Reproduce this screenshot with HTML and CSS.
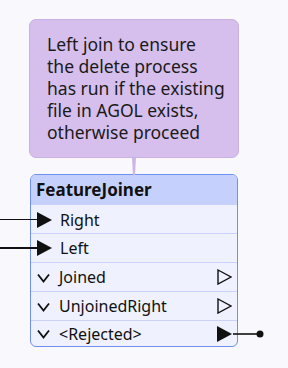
FILE: index.html
```html
<!DOCTYPE html>
<html>
<head>
<meta charset="utf-8">
<link rel="stylesheet" href="styles.css">
</head>
<body>
<div class="canvas">
  <div class="note">
    <p class="note-text">Left join to ensure<br>the delete process<br>has run if the existing<br>file in AGOL exists,<br>otherwise proceed</p>
  </div>
  <div class="node">
    <div class="node-header">FeatureJoiner</div>
    <div class="row in first">
      <span class="wire-in"></span>
      <svg class="port-in" width="15" height="16" viewBox="0 0 15 16"><polygon points="0,0 15,8 0,16" fill="#111"/></svg>
      <span class="label">Right</span>
    </div>
    <div class="row in">
      <span class="wire-in"></span>
      <svg class="port-in" width="15" height="16" viewBox="0 0 15 16"><polygon points="0,0 15,8 0,16" fill="#111"/></svg>
      <span class="label">Left</span>
    </div>
    <div class="row out">
      <svg class="chev" width="13" height="10" viewBox="0 0 13 10"><polyline points="1,1.5 6.5,8.5 12,1.5" fill="none" stroke="#111" stroke-width="1.8"/></svg>
      <span class="label">Joined</span>
      <svg class="port-out" width="15" height="16" viewBox="0 0 15 16"><polygon points="1,1 14,8 1,15" fill="none" stroke="#111" stroke-width="1.4"/></svg>
    </div>
    <div class="row out">
      <svg class="chev" width="13" height="10" viewBox="0 0 13 10"><polyline points="1,1.5 6.5,8.5 12,1.5" fill="none" stroke="#111" stroke-width="1.8"/></svg>
      <span class="label">UnjoinedRight</span>
      <svg class="port-out" width="15" height="16" viewBox="0 0 15 16"><polygon points="1,1 14,8 1,15" fill="none" stroke="#111" stroke-width="1.4"/></svg>
    </div>
    <div class="row out last">
      <svg class="chev" width="13" height="10" viewBox="0 0 13 10"><polyline points="1,1.5 6.5,8.5 12,1.5" fill="none" stroke="#111" stroke-width="1.8"/></svg>
      <span class="label">&lt;Rejected&gt;</span>
      <svg class="port-out" width="15" height="16" viewBox="0 0 15 16"><polygon points="0,0 15,8 0,16" fill="#111"/></svg>
      <svg class="wire-out" width="32" height="10" viewBox="0 0 32 10"><line x1="0" y1="5" x2="27" y2="5" stroke="#111" stroke-width="1.6"/><circle cx="27" cy="5" r="3.5" fill="#111"/></svg>
    </div>
  </div>
</div>
</body>
</html>
```
FILE: styles.css
```css
* { box-sizing: border-box; }
html, body { margin: 0; padding: 0; }
body {
  background: #f9f8fc;
  width: 288px;
  height: 368px;
  overflow: hidden;
  font-family: "Noto Sans", "Open Sans", sans-serif;
  color: #111;
}
.canvas {
  padding-top: 19px;
}
.note {
  position: relative;
  margin-left: 29px;
  width: 210px;
  height: 139px;
  background: #d6bfec;
  border: 1px solid #c8b0e2;
  border-radius: 7px;
  padding: 13px 0 0 17px;
}
.note::after {
  content: "";
  position: absolute;
  left: 102px;
  top: 138px;
  width: 4px;
  height: 17px;
  background: #cdb6e6;
  clip-path: polygon(0 0, 100% 0, 75% 100%, 25% 100%);
}
.note-text {
  margin: 0;
  font-size: 17.5px;
  line-height: 22px;
  color: #1a1a1a;
}
.node {
  margin-left: 30px;
  margin-top: 16px;
  width: 208px;
  border: 1px solid #6d8ff0;
  border-radius: 6px;
  background: #eff1fe;
}
.node-header {
  height: 30px;
  background: #c5d1fc;
  border-radius: 5px 5px 0 0;
  font-weight: 700;
  font-size: 17px;
  line-height: 30px;
  padding-left: 5px;
  color: #111;
}
.row {
  position: relative;
  display: flex;
  align-items: center;
  height: 29px;
  border-top: 1px solid #c9d3fa;
  font-size: 16px;
}
.row.first { height: 28px; border-top-color: #eff1fe; }
.row.last { height: 26px; }
.row svg { flex-shrink: 0; display: block; }
.label { margin-left: 9px; }
.port-in { margin-left: 6px; }
.port-in + .label { margin-left: 8px; }
.chev { margin-left: 6px; margin-top: 1px; }
.label + .port-out { margin-left: auto; }
.port-out { margin-right: 5px; }
.wire-in {
  position: absolute;
  left: -31px;
  top: 50%;
  width: 40px;
  height: 1.6px;
  margin-top: -1px;
  background: #111;
}
.wire-out {
  position: absolute;
  right: -28px;
  top: 50%;
  margin-top: -5px;
}
```
